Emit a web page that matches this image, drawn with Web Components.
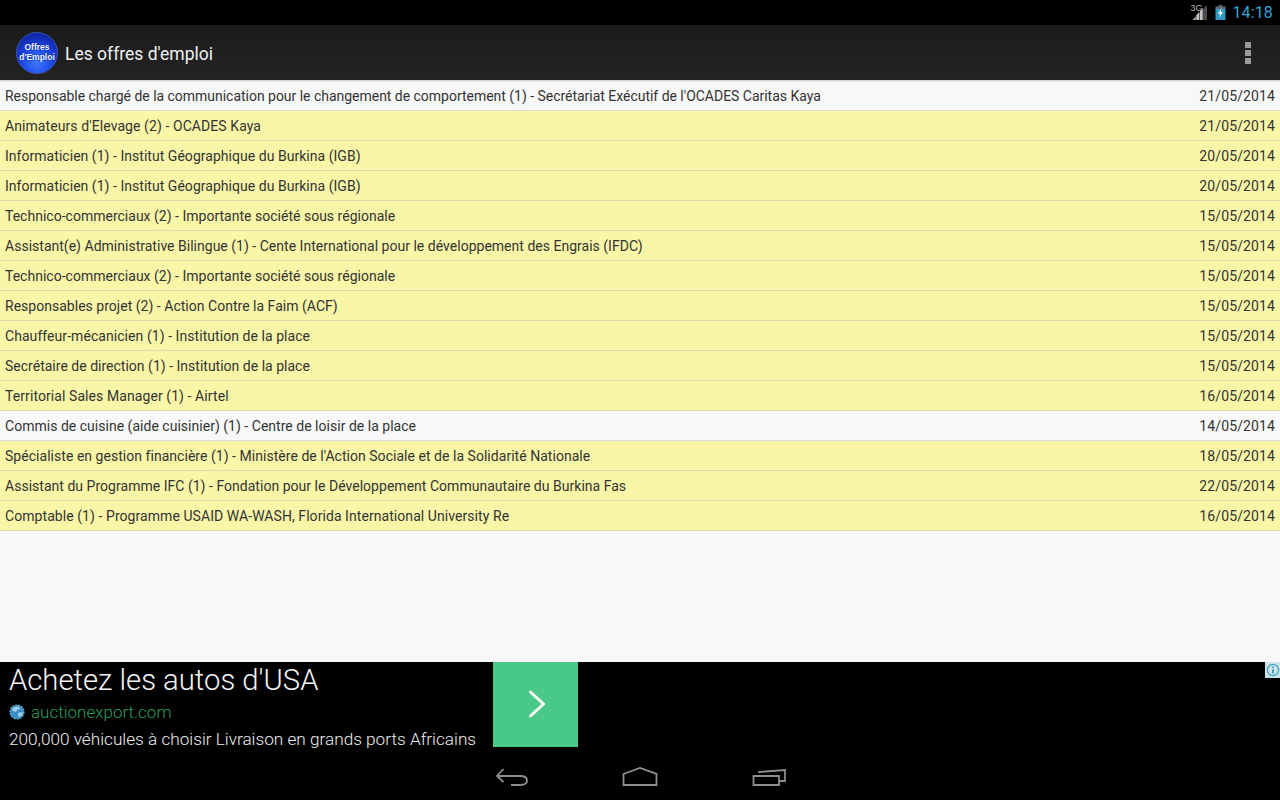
<!DOCTYPE html>
<html>
<head>
<meta charset="utf-8">
<style>
  html, body { margin: 0; height: 100%; background: #f8f8f8; }
  body { font-family: Roboto, "Liberation Sans", sans-serif; overflow: hidden; }
  app-screen { width: 1280px; height: 800px; }
</style>
</head>
<body>
<app-screen>
  <status-bar slot="status"></status-bar>
  <action-bar slot="action" title="Les offres d'emploi"></action-bar>
  <job-list slot="list">
    <job-row style="--track:-.024px" date="21/05/2014">Responsable chargé de la communication pour le changement de comportement (1) - Secrétariat Exécutif de l'OCADES Caritas Kaya</job-row>
    <job-row style="--track:.08px" hl date="21/05/2014">Animateurs d'Elevage (2) - OCADES Kaya</job-row>
    <job-row style="--track:.035px" hl date="20/05/2014">Informaticien (1) - Institut Géographique du Burkina (IGB)</job-row>
    <job-row style="--track:.035px" hl date="20/05/2014">Informaticien (1) - Institut Géographique du Burkina (IGB)</job-row>
    <job-row style="--track:.01px" hl date="15/05/2014">Technico-commerciaux (2) - Importante société sous régionale</job-row>
    <job-row style="--track:.015px" hl date="15/05/2014">Assistant(e) Administrative Bilingue (1) - Cente International pour le développement des Engrais (IFDC)</job-row>
    <job-row style="--track:.01px" hl date="15/05/2014">Technico-commerciaux (2) - Importante société sous régionale</job-row>
    <job-row style="--track:.02px" hl date="15/05/2014">Responsables projet (2) - Action Contre la Faim (ACF)</job-row>
    <job-row style="--track:.06px" hl date="15/05/2014">Chauffeur-mécanicien (1) - Institution de la place</job-row>
    <job-row style="--track:.01px" hl date="15/05/2014">Secrétaire de direction (1) - Institution de la place</job-row>
    <job-row style="--track:.08px" hl date="16/05/2014">Territorial Sales Manager (1) - Airtel</job-row>
    <job-row style="--track:.02px" date="14/05/2014">Commis de cuisine (aide cuisinier) (1) - Centre de loisir de la place</job-row>
    <job-row style="--track:.035px" hl date="18/05/2014">Spécialiste en gestion financière (1) - Ministère de l'Action Sociale et de la Solidarité Nationale</job-row>
    <job-row style="--track:.025px" hl date="22/05/2014">Assistant du Programme IFC (1) - Fondation pour le Développement Communautaire du Burkina Fas</job-row>
    <job-row style="--track:.065px" hl date="16/05/2014">Comptable (1) - Programme USAID WA-WASH, Florida International University Re</job-row>
  </job-list>
  <ad-banner slot="ad"></ad-banner>
  <nav-bar slot="nav"></nav-bar>
</app-screen>

<script>
class AppScreen extends HTMLElement {
  constructor() {
    super();
    this.attachShadow({ mode: "open" });
    this.shadowRoot.innerHTML = `
      <style>
        :host { display: flex; flex-direction: column; background: #f8f8f8; }
        .grow { flex: 1; min-height: 0; }
      </style>
      <slot name="status"></slot>
      <slot name="action"></slot>
      <div class="grow"><slot name="list"></slot></div>
      <slot name="ad"></slot>
      <slot name="nav"></slot>`;
  }
}

class StatusBar extends HTMLElement {
  constructor() {
    super();
    this.attachShadow({ mode: "open" });
    this.shadowRoot.innerHTML = `
      <style>
        :host { display: flex; height: 25px; background: #000; align-items: center; justify-content: flex-end; padding-right: 7px; box-sizing: border-box; }
        .sig { position: relative; width: 18px; height: 15px; margin-right: 7px; margin-top: 0; }
        .sig span { position: absolute; left: 0; top: -1px; font-size: 9px; line-height: 9px; color: #b4b4b4; font-family: "Liberation Sans", sans-serif; }
        svg { display: block; }
        .bat { margin-right: 6px; margin-top: 0; }
        .time { font: 16px/25px Roboto, sans-serif; color: #33a5d5; letter-spacing: .15px; }
      </style>
      <div class="sig">
        <span>3G</span>
        <svg width="18" height="15" viewBox="0 0 18 15">
          <path d="M17 0V15H2z" fill="#4a4a4a"/>
          <path d="M3 15l2.600-3v3zM6.500 15v-5l2.600-3V15zM10 15V6l2.600-3V15z" fill="#c4c4c4"/>
        </svg>
      </div>
      <svg class="bat" width="11" height="15" viewBox="0 0 11 15">
        <path d="M3.500 0h4v1.500h3V4H.5V1.500h3z" fill="#5a6a70"/>
        <path d="M.5 4h10v11H.5z" fill="#2e9ac4"/>
        <path d="M6.500 3 3 8.800h2.200L4 13l4-6H5.700z" fill="#fff"/>
      </svg>
      <span class="time">14:18</span>`;
  }
}

class ActionBar extends HTMLElement {
  constructor() {
    super();
    this.attachShadow({ mode: "open" });
    this.shadowRoot.innerHTML = `
      <style>
        :host { display: flex; position: relative; height: 56px; box-sizing: border-box; align-items: center; padding: 0 29px 0 16px; background: linear-gradient(#1b1b1b, #232323); border-bottom: 1px solid #d4d4d4; box-shadow: 0 1px 1px rgba(0,0,0,.08); color: #f0f0f0; }
        .logo { width: 42px; height: 42px; border-radius: 50%; flex: none; display: flex; align-items: center; justify-content: center; text-align: center; box-sizing: border-box; border: 1px solid #3a55b4; background: radial-gradient(circle at 50% 72%, #3e7bff 0, #1c46e6 45%, #0e22a0 82%, #0a1670 100%); font: bold 8.500px/9.500px "Liberation Sans", sans-serif; color: #eef3ff; text-shadow: 0 0 2px #0a1a70; }
        h1 { flex: 1; margin: 2px 0 0 7px; font: 400 17.500px Roboto, sans-serif; }
        .more { display: flex; flex-direction: column; gap: 2px; margin-top: 1px; }
        .more i { display: block; width: 6px; height: 6px; background: #9a9a9a; }
      </style>
      <div class="logo"><span>Offres<br>d'Emploi</span></div>
      <h1></h1>
      <div class="more"><i></i><i></i><i></i></div>`;
    this.shadowRoot.querySelector("h1").textContent = this.getAttribute("title");
  }
}

class JobList extends HTMLElement {
  constructor() {
    super();
    this.attachShadow({ mode: "open" });
    this.shadowRoot.innerHTML = `
      <style>:host { display: block; }</style>
      <slot></slot>`;
  }
}

class JobRow extends HTMLElement {
  constructor() {
    super();
    this.attachShadow({ mode: "open" });
    this.shadowRoot.innerHTML = `
      <style>
        :host { display: flex; height: 30px; box-sizing: border-box; padding: 0 5px; align-items: center; justify-content: space-between; background: #f8f8f8; border-bottom: 1px solid #dcdcdc; font: 14px Roboto, sans-serif; color: #333; white-space: nowrap; }
        :host([hl]) { background: #f9f6a8; border-bottom-color: #dedcb0; }
        .name { letter-spacing: var(--track, 0); }
        .date { letter-spacing: .12px; }
      </style>
      <span class="name"><slot></slot></span>
      <span class="date"></span>`;
    this.shadowRoot.querySelector(".date").textContent = this.getAttribute("date");
  }
}

class AdBanner extends HTMLElement {
  constructor() {
    super();
    this.attachShadow({ mode: "open" });
    this.shadowRoot.innerHTML = `
      <style>
        :host { display: flex; height: 85px; background: #000; position: relative; font-family: Roboto, sans-serif; }
        .txt { width: 493px; box-sizing: border-box; padding-left: 9px; white-space: nowrap; }
        .head { font-size: 29.250px; font-weight: 300; line-height: 36px; color: #f4f4f4; }
        .site { display: flex; align-items: center; gap: 6px; font-size: 17px; font-weight: 300; line-height: 20px; color: #2a9f5e; margin-top: 4px; }
        .desc { font-size: 17.200px; font-weight: 300; line-height: 20px; color: #eee; margin-top: 7px; }
        .go { width: 85px; height: 85px; background: #48c987; display: flex; align-items: center; justify-content: center; }
        .go svg { margin: -1px 0 0 3px; }
        .info { position: absolute; right: 0; top: 0; width: 15px; height: 16px; background: #cfe3e8; display: flex; align-items: center; justify-content: center; }
      </style>
      <div class="txt">
        <div class="head">Achetez les autos d'USA</div>
        <div class="site">
          <svg width="16" height="16" viewBox="0 0 16 16"><circle cx="8" cy="8" r="6.800" fill="#3a8fc4" stroke="#5aa8d4" stroke-width="1.600" stroke-dasharray="2 1"/><path d="M3 5c2-2 5-3 7-2l1 2-3 1-1 2-3-1zM9 9l4-1 1 2-3 3-2-1z" fill="#9ccde8"/></svg>
          <span>auctionexport.com</span>
        </div>
        <div class="desc">200,000 véhicules à choisir Livraison en grands ports Africains</div>
      </div>
      <div class="go">
        <svg width="18" height="28" viewBox="0 0 18 28"><path d="M2.500 2 15.500 14 2.500 26" fill="none" stroke="#fff" stroke-width="3" stroke-linecap="round" stroke-linejoin="round"/></svg>
      </div>
      <div class="info">
        <svg width="14" height="14" viewBox="0 0 14 14"><circle cx="7" cy="7" r="5.600" fill="none" stroke="#3ba9c6" stroke-width="1.300"/><path d="M7 3.600v1.400M7 6.200v4.200" stroke="#2a8fb0" stroke-width="1.600"/></svg>
      </div>`;
  }
}

class NavBar extends HTMLElement {
  constructor() {
    super();
    this.attachShadow({ mode: "open" });
    this.shadowRoot.innerHTML = `
      <style>
        :host { display: flex; height: 53px; background: #000; justify-content: center; align-items: flex-start; padding-top: 20px; box-sizing: border-box; gap: 93.500px; }
        svg { display: block; }
        svg * { fill: none; stroke: #8e8e8e; stroke-width: 1.800; }
      </style>
      <svg width="34" height="20" viewBox="0 0 34 20"><path d="M8.500 2 2 9l6.500 6"/><path d="M2 9h23c4.500 0 7 2 7 4.500S29.500 18 25 18h-9"/></svg>
      <svg width="36" height="20" viewBox="0 0 36 20"><path d="M1.500 7 18 1l16.500 6v11h-33z"/></svg>
      <svg width="34" height="20" viewBox="0 0 34 20"><path d="M1.500 9H27v9H1.500z"/><path d="M7 6V5l26-2v11h-5"/></svg>`;
  }
}

customElements.define("app-screen", AppScreen);
customElements.define("status-bar", StatusBar);
customElements.define("action-bar", ActionBar);
customElements.define("job-list", JobList);
customElements.define("job-row", JobRow);
customElements.define("ad-banner", AdBanner);
customElements.define("nav-bar", NavBar);
</script>
</body>
</html>
